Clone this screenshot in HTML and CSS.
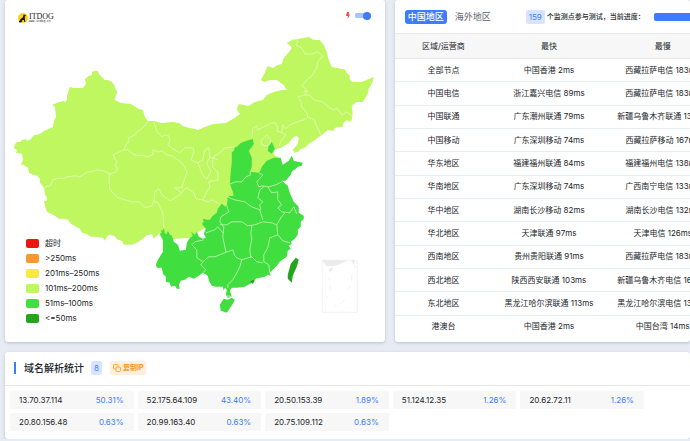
FILE: index.html
```html
<!DOCTYPE html>
<html lang="zh-CN">
<head>
<meta charset="utf-8">
<title>ITDOG</title>
<link rel="stylesheet" href="styles.css">
</head>
<body>
<main class="page">
<div class="top">
<section class="card map-card">
<svg class="map" viewBox="5 0 380 342" aria-hidden="true">
<path class="light" d="M14 148L15 144 17 142 20 142 22 140 26 139 27 141 31 139 33 136 35 135 40 134 44 131 53 127 54 121 56 117 55 107 54 106 52 105 59 102 64 101 65 102 67 100 67 96 70 87 74 88 83 88 86 84 85 79 89 76 92 75 92 72 94 71 98 71 99 74 105 80 108 80 112 82 115 86 115 88 117 91 117 94 116 95 115 100 121 103 131 104 139 109 143 110 145 117 148 121 154 121 162 123 173 122 179 123 183 126 190 128 195 129 198 130 205 127 213 124 226 123 233 119 240 114 237 109 239 104 249 106 255 102 263 100 267 95 274 92 282 90 287 90 284 85 277 80 270 80 265 82 261 80 264 75 266 70 268 66 273 68 278 65 282 64 284 58 290 51 292 48 290 45 287 43 292 40 298 39 309 37 314 40 320 40 324 45 327 52 329 60 332 67 342 69 345 69 347 73 350 75 350 79 352 82 362 82 369 79 374 77 373 82 369 89 368 94 363 102 357 102 352 106 353 113 352 120 350 122 347 120 343 124 343 127 338 127 335 128 334 131 328 130 322 135 315 140 309 144 305 148 301 149 298 152 295 153 293 150 298 144 299 138 297 136 294 137 289 143 281 148 274 150 274 155 281 159 240 205 190 238 163 240 160 236 160 233 157 236 154 239 152 234 146 236 143 239 137 243 132 245 124 245 122 241 118 240 114 236 109 235 107 237 105 241 103 238 95 237 91 237 86 234 82 233 80 229 78 228 71 224 68 220 64 219 59 219 55 216 47 212 45 206 44 201 47 201 47 198 45 195 44 188 40 183 40 179 37 176 33 175 29 173 28 168 23 165 21 165 23 160 22 154 16 153 17 150Z"/>
<path class="green" d="M253 139L246 141 241 143 237 147 235 147 234 151 232 152 232 162 231 172 230 184 233 192 234 196 230 196 227 198 228 200 226 207 222 204 218 209 217 213 213 216 210 220 207 220 203 219 204 222 202 224 206 229 204 234 206 238 203 239 199 237 197 232 195 235 191 232 193 236 190 238 187 243 186 250 180 251 178 245 174 242 172 236 170 235 168 231 167 234 165 234 164 228 163 231 161 230 162 233 160 234 163 240 163 252 158 260 156 265 157 268 162 268 163 274 166 277 166 282 170 283 171 287 175 286 177 289 180 289 179 285 181 281 185 280 189 277 194 279 199 276 203 273 208 276 209 281 212 286 216 287 223 287 224 291 225 288 227 290 226 295 228 298 232 297 230 291 232 288 237 288 245 287 252 283 256 279 265 277 268 275 271 276 270 273 277 266 280 262 284 259 287 257 288 251 291 249 289 246 292 244 291 242 295 239 298 235 298 230 301 227 301 222 304 219 304 216 299 213 299 208 298 206 294 202 290 193 288 186 282 181 286 181 291 175 292 172 296 169 298 167 302 166 303 163 298 162 294 161 292 156 289 161 283 165 282 162 281 158 274 158 267 161 262 167 261 170 259 173 250 172 252 167 252 158 249 151 254 144Z"/>
<path class="green" d="M272 142L274 146 275 149 272 154 268 151 269 145Z"/>
<path class="green" d="M224 299L228 300 232 298 235 300 233 304 227 313 221 311 220 305Z"/>
<path class="dark" d="M296 258L299 260 297 267 293 276 292 283 288 279 288 275 291 264Z"/>
<path class="dark" d="M250 282l4-2 1 1-2 3z"/>
<path class="border" d="M148 121L147 123 142 129 138 131 135 135 129 138 128 143 126 145 124 150 113 155 117 162 115 166 118 168 116 172 110 174 108 173 104 171 97 170 90 172 88 172 80 177 75 176 67 177 63 179 59 178 53 180 50 186 45 187M108 173L110 175 109 179 110 190 114 194 118 198 125 200 132 202 140 202 145 208 152 206 154 201 158 203 163 213 164 228M154 201L155 192 159 189 162 195 170 201 177 197 182 193 175 188 182 188 183 184 187 173 185 167 182 163 178 160 172 156 167 155 162 151 159 152 153 150 153 155 147 157 142 155 138 156 133 154 128 150 124 150M154 122L157 132 162 137 164 135 169 136 170 142 168 145 173 149 180 153 185 148 193 148 194 152 191 160 198 163 202 173 205 178 207 179 211 172 207 163 210 157 218 160M198 163L203 160 205 150 209 148 210 157M213 160L213 168 218 172 218 180 209 182 210 187 207 192 203 200 196 199 194 193 187 188 184 190 182 193M212 162L215 156 220 153 225 148 235 147M203 200L208 202 213 200 220 205"/>
<path class="border" d="M297 39L298 42 296 45 302 48 305 54 312 54 318 52 323 56 318 62 317 68 312 76 308 79 302 86 307 90 304 92 308 91 305 95 298 97 301 101 302 107 307 113 308 117 315 120 316 125 318 128 321 135M305 95L310 95 314 100 323 102 330 108 334 110 337 108 342 115 347 112 352 116M308 117L304 120 300 121 290 125 286 129 283 125 282 133 286 135 281 142 279 147M282 133L277 131 278 128 276 123 272 123 268 125 262 128 258 130 257 126 253 128 252 138M267 135L271 140 270 145 266 146 262 145 261 141Z"/>
<path class="border" d="M230 184L236 182 242 182 246 177 251 175 250 172M259 173L263 175 257 182 259 187 263 186 269 187 276 185 282 182M268 187L272 193 278 192 278 200 282 205 278 208 282 212 290 213 294 207 297 214M264 187L260 190 258 198 263 202 260 205 261 210 M227 197L235 200 245 202 252 207 260 210 263 220M220 225L227 225 232 222 242 222 248 226 255 225 263 222 272 223 277 225M226 203L229 212 221 217 220 222 224 227 223 237 226 252M206 233L215 230 218 227 223 233M204 240L195 242 192 245 197 250 197 258 203 262 209 257 215 257 225 253 233 250 235 256 237 258M203 262L201 265 206 270 203 273M252 226L251 234 252 239 250 250 251 258M237 258L242 260 252 257 257 262 263 263M242 260L240 267 237 273 233 280 228 285 228 288M278 235L270 238 268 248 264 255 264 262 269 265 270 273M285 213L281 218 277 225 278 235 283 241 290 243M227 296L233 297"/>
<path class="inset" d="M322.5 260.5H357.5V312.5H322.5Z"/>
<path class="sea" d="M323 261H346L340 264 334 266 327 266ZM352 261h3l-1 3zM329 270l4-2-2 4zM329 278l1 3M352 275v6M354 265l2 3M330 286l1 4M351 286l-3 4M327 296v3M345 300l-4 4M337 305l-2 2M308 254h1"/>
</svg>
<a class="brand" href="#">
<svg class="brand-mark" viewBox="0 0 10 10" aria-hidden="true"><circle cx="5" cy="5" r="5" fill="#ffd20a"/><path d="M5.600 1.600L7.800 2 7.600 3 6.800 3.400 6.900 6 7.300 9H6.300L5.900 7 4.400 7 4 8.600 2.800 9.400 1 9.200.9 7.600 2 8 2.500 6 4.800 4.400Z" fill="#171717"/></svg>
<span class="brand-text"><b>ITDOG</b><small>www.itdog.cn</small></span>
</a>
<label class="speed"><svg class="bolt" viewBox="0 0 4 7" aria-hidden="true"><path d="M1 0H3L2.600 2.500H4L1.700 7 1.800 4H0Z" fill="#f5483b"/></svg><input type="checkbox" checked aria-label="快速"></label>
<ul class="legend">
<li class="l-timeout">超时</li>
<li class="l-slow">&gt;250ms</li>
<li class="l-mid">201ms–250ms</li>
<li class="l-fair">101ms–200ms</li>
<li class="l-good">51ms–100ms</li>
<li class="l-best">&lt;=50ms</li>
</ul>
</section>
<section class="card result-card">
<div class="toolbar">
<button class="tab active" type="button">中国地区</button>
<button class="tab" type="button">海外地区</button>
<span class="badge total">159</span>
<label class="status" for="progress">个监测点参与测试，当前进度：</label>
<progress id="progress" max="100" value="100"></progress>
</div>
<table class="results">
<thead><tr><th class="c-area">区域/运营商</th><th class="c-fast">最快</th><th class="c-slow">最慢</th></tr></thead>
<tbody>
<tr><td>全部节点</td><td>中国香港 2ms</td><td>西藏拉萨电信 183ms</td></tr>
<tr><td>中国电信</td><td>浙江嘉兴电信 89ms</td><td>西藏拉萨电信 183ms</td></tr>
<tr><td>中国联通</td><td>广东潮州联通 79ms</td><td>新疆乌鲁木齐联通 130ms</td></tr>
<tr><td>中国移动</td><td>广东深圳移动 74ms</td><td>西藏拉萨移动 167ms</td></tr>
<tr><td>华东地区</td><td>福建福州联通 84ms</td><td>福建福州电信 138ms</td></tr>
<tr><td>华南地区</td><td>广东深圳移动 74ms</td><td>广西南宁电信 133ms</td></tr>
<tr><td>华中地区</td><td>湖南长沙移动 82ms</td><td>湖南长沙电信 132ms</td></tr>
<tr><td>华北地区</td><td>天津联通 97ms</td><td>天津电信 126ms</td></tr>
<tr><td>西南地区</td><td>贵州贵阳联通 91ms</td><td>西藏拉萨电信 183ms</td></tr>
<tr><td>西北地区</td><td>陕西西安联通 103ms</td><td>新疆乌鲁木齐电信 164ms</td></tr>
<tr><td>东北地区</td><td>黑龙江哈尔滨联通 113ms</td><td>黑龙江哈尔滨电信 130ms</td></tr>
<tr><td>港澳台</td><td>中国香港 2ms</td><td>中国台湾 14ms</td></tr>
</tbody>
</table>
</section>
</div>
<section class="card dns-card">
<header class="dns-head">
<h2>域名解析统计</h2>
<span class="badge">8</span>
<button class="copy" type="button"><svg class="copy-icon" viewBox="0 0 8 8" aria-hidden="true"><rect x="3" y="3" width="4.500" height="4.500" rx="1"/><path d="M3 5H1.500Q.5 5 .5 4V1.500Q.5.5 1.500.5H4Q5 .5 5 1.500V3"/></svg>复制IP</button>
</header>
<ul class="ips">
<li><span>13.70.37.114</span><b>50.31%</b></li>
<li><span>52.175.64.109</span><b>43.40%</b></li>
<li><span>20.50.153.39</span><b>1.89%</b></li>
<li><span>51.124.12.35</span><b>1.26%</b></li>
<li><span>20.62.72.11</span><b>1.26%</b></li>
<li><span>20.80.156.48</span><b>0.63%</b></li>
<li><span>20.99.163.40</span><b>0.63%</b></li>
<li><span>20.75.109.112</span><b>0.63%</b></li>
</ul>
</section>
</main>
</body>
</html>
```
FILE: styles.css
```css
* { box-sizing: border-box; }
body { margin: 0; background: #e7ebf3; color: #212529; font: 8px/12px Inter, "Noto Sans CJK SC", sans-serif; overflow: hidden; }
button { border: 0; background: none; padding: 0; font: inherit; }
ul { list-style: none; margin: 0; padding: 0; }
.page { display: grid; gap: 10px; padding-left: 5px; }
.top { display: grid; grid-template-columns: minmax(0, 9fr) minmax(0, 7fr); gap: 10px; }
.card { background: #fff; border-radius: 3px; box-shadow: 0 1px 3px #b3bfcc; min-width: 0; }

.map-card { position: relative; }
.map { display: block; width: 100%; }
.light { fill: #bff761; }
.green { fill: #40de3e; }
.dark { fill: #23a61c; }
.border { fill: none; stroke: #effcdc; stroke-width: .7; stroke-linejoin: round; opacity: .9; }
.inset { fill: none; stroke: #f2f2f2; }
.sea { fill: #ebebeb; stroke: #e8e8e8; stroke-width: .6; }
.brand { position: absolute; left: 13px; top: 13px; display: flex; color: #222; text-decoration: none; }
.brand-mark { width: 10px; height: 10px; }
.brand-text { display: grid; margin-left: 1px; }
.brand b { font: 8px/7px "Liberation Serif", serif; font-weight: 400; }
.brand small { font: 3px/3px "Liberation Mono", monospace; }
.speed { position: absolute; right: 14px; top: 11px; display: flex; align-items: center; gap: 5px; }
.bolt { width: 4px; height: 7px; }
.speed input { appearance: none; display: flex; align-items: center; justify-content: flex-end; width: 16px; height: 9px; margin: 0; background: linear-gradient(#a9c3ff, #a9c3ff) center / 100% 5px no-repeat; border-radius: 5px; }
.speed input::before { content: ""; width: 8px; height: 8px; border-radius: 50%; background: #3d7bff; }
.legend { position: absolute; left: 21px; bottom: 16px; }
.legend li { display: flex; align-items: center; gap: 6px; height: 15px; }
.legend li::before { content: ""; width: 13px; height: 9px; border-radius: 2px; background: currentColor; }
.l-timeout::before { color: #ea160f; }
.l-slow::before { color: #fa982f; }
.l-mid::before { color: #f9ea42; }
.l-fair::before { color: #bff761; }
.l-good::before { color: #40de3e; }
.l-best::before { color: #23a61c; }

.result-card { display: flex; flex-direction: column; overflow: hidden; padding-bottom: 4px; }
.toolbar { display: flex; align-items: center; height: 33px; padding-left: 10px; white-space: nowrap; flex: none; }
.tab { padding: 0 3px; margin-right: 5px; border-radius: 3px; color: #5c636a; font-size: 9px; line-height: 14px; flex: none; }
.tab.active { background: #3d7bff; color: #fff; font-weight: 500; }
.badge { padding: 0 3px; border-radius: 2px; background: #d8e4ff; color: #3d7bff; line-height: 14px; }
.total { margin-left: 27px; }
.status { margin-left: 2px; font-size: 7px; font-weight: 500; }
progress { appearance: none; flex: 1 0 120px; height: 8px; margin-left: 9px; border: 0; }
progress::-webkit-progress-bar { background: #d8e4ff; border-radius: 2px; }
progress::-webkit-progress-value { background: #3d7bff; border-radius: 2px; }
.results { flex: 1; width: 110%; border-collapse: collapse; table-layout: fixed; text-align: center; white-space: nowrap; }
.c-area { width: 30%; }
.c-fast { width: 35%; }
.c-slow { width: 35%; }
th { height: 25px; padding: 0 0 1px; background: #f7f7f7; border: solid #e6e9ec; border-width: 1px 0; font-weight: 400; }
td { padding: 0 0 1px; border-bottom: 1px solid #e8edf2; }
tr:last-child td { border: 0; }

.dns-head { display: flex; align-items: center; height: 34px; padding-left: 9px; border-bottom: 1px solid #e4e6e8; }
h2 { margin: 0 7px 0 0; padding-left: 8px; border-left: 2px solid #3d7bff; font-size: 10px; font-weight: 500; line-height: 12px; }
.copy { display: flex; align-items: center; gap: 2px; margin-left: 8px; padding: 0 3px; border-radius: 2px; background: #fff0dc; color: #ff9215; font-size: 7px; font-weight: 700; line-height: 14px; }
.copy-icon { width: 8px; height: 8px; fill: none; stroke: currentColor; stroke-width: .8; }
.ips { display: grid; grid-template-columns: repeat(5, 1fr); gap: 4px; padding: 5px 46px 8px 5px; }
.ips li { display: flex; justify-content: space-between; padding: 0 10px 0 9px; background: #f7f7f7; border-radius: 1px; line-height: 18px; }
.ips b { color: #3d7bff; font-weight: 400; }
```
